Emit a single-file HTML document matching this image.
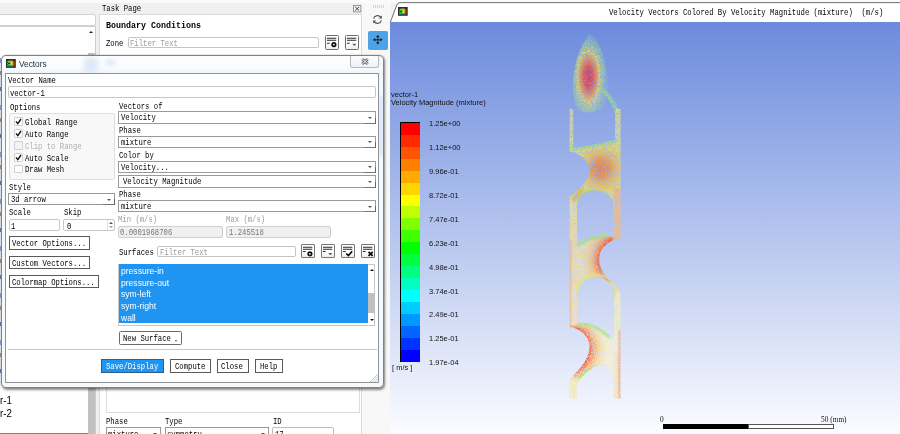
<!DOCTYPE html>
<html><head><meta charset="utf-8"><title>Vectors</title>
<style>
html,body{margin:0;padding:0}
body{width:900px;height:434px;overflow:hidden;background:#f0f0f0;position:relative;font-family:"Liberation Mono",monospace;font-size:9px;color:#000}
div,span{position:absolute;box-sizing:border-box}
.m{font:9px/9px "Liberation Mono",monospace;white-space:pre;transform:scaleX(.806);transform-origin:0 0;color:#000}
.b{font:bold 9px/9px "Liberation Mono",monospace;white-space:pre;transform:scaleX(.926);transform-origin:0 0}
.s{font:9.3px/10px "Liberation Sans",sans-serif;white-space:pre;transform:scaleX(.89);transform-origin:0 0}
.g{color:#9a9a9a}
.in{background:#fff;border:1px solid #c6c6c6;border-radius:2px}
.dd{background:#fff;border:1px solid #9a9a9a}
.dd:after{content:"";position:absolute;right:3px;top:4.5px;border:2px solid transparent;border-top:2.5px solid #555;border-bottom:0}
.dd:before{content:"";position:absolute;right:-1px;bottom:-1px;width:11px;height:5px;border-right:1.5px solid #666;border-bottom:1.5px solid #777}
.bt{background:#fff;border:1px solid #5a5a5a}
.ib{background:linear-gradient(#fff 55%,#ececec);border:1px solid #6e6e6e;border-radius:1.5px}
.cb{width:8.5px;height:8.5px;background:#fff;border:1px solid #d0d0d0;border-radius:1px}
.ro{background:#f0f0f0;border:1px solid #cfcfcf;border-radius:2px}
</style></head><body>

<div class="" style="left:0px;top:0px;width:900.0px;height:2.5px;background:#fbfbfb"></div>
<div class="in" style="left:-2px;top:14px;width:97.5px;height:11.5px;border-color:#d2d2d2"></div>
<div class="" style="left:-2px;top:26px;width:97.8px;height:414.0px;background:#fff;border:1px solid #cdcdcd"></div>
<div class="" style="left:88px;top:27px;width:7.0px;height:413.0px;background:#fdfdfd"></div>
<div style="left:89.3px;top:31px;border:2.2px solid transparent;border-bottom:2.6px solid #222;border-top:0"></div>
<div class="" style="left:88.2px;top:52.5px;width:6.6px;height:387.5px;background:#c1c1c1"></div>
<span class="s" style="left:0;top:395.6px;font-size:10px;transform:scaleX(.97)">r-1</span><span class="s" style="left:0;top:408.7px;font-size:10px;transform:scaleX(.97)">r-2</span>
<div class="" style="left:0px;top:432.7px;width:88.2px;height:1.3px;background:#2a95f0"></div>
<span class="m" style="left:102px;top:4.6px;">Task Page</span>
<div class="" style="left:99px;top:14.3px;width:262.8px;height:425.7px;background:#fff;border:1px solid #d9d9d9"></div>
<svg style="position:absolute;left:353px;top:5px" width="9" height="8" viewBox="0 0 9 8"><rect x=".5" y=".5" width="7.4" height="6.4" fill="#f4f4f4" stroke="#8a8a8a" stroke-width=".9"/><path d="M2.2 1.9L6.2 5.5M6.2 1.9L2.2 5.5" stroke="#444" stroke-width="1"/></svg>
<span class="b" style="left:105.8px;top:21.8px;">Boundary Conditions</span>
<span class="m" style="left:106.2px;top:40.1px;">Zone</span>
<div class="in" style="left:127.5px;top:37.2px;width:191.8px;height:10.4px;border-color:#c4c4c4"></div>
<span class="m g" style="left:130px;top:39.6px;">Filter Text</span>
<div class="ib" style="left:325.1px;top:35.3px;width:13.8px;height:14.3px;"><svg style="position:absolute;left:0;top:0" width="12" height="12.4" viewBox="0 0 12 12.4"><path d="M.9 2.2h9.400M.9 4.3h9.400M.9 7.2h2.800" stroke="#2a2a2a" stroke-width="1.05" fill="none"/><circle cx="7.900" cy="8.6" r="1.750" fill="none" stroke="#0a0a0a" stroke-width="1.700"/></svg></div>
<div class="ib" style="left:345.1px;top:35.3px;width:13.8px;height:14.3px;"><svg style="position:absolute;left:0;top:0" width="12" height="12.4" viewBox="0 0 12 12.4"><path d="M.9 2.2h9.400M.9 4.3h9.400M.9 7.2h2.800" stroke="#2a2a2a" stroke-width="1.05" fill="none"/><path d="M6.200 7.80h4.200l-2.100 2.100z" fill="#5a5a5a"/></svg></div>
<div class="" style="left:106px;top:380px;width:253.7px;height:32.6px;border:1px solid #dcdcdc;background:#fff"></div>
<span class="m" style="left:106px;top:417.8px;">Phase</span>
<span class="m" style="left:165px;top:417.8px;">Type</span>
<span class="m" style="left:273px;top:417.8px;">ID</span>
<div class="dd" style="left:105.5px;top:427px;width:55.5px;height:13.6px;"></div>
<span class="m" style="left:108px;top:430.8px;">mixture</span>
<div class="dd" style="left:164.7px;top:427px;width:104.3px;height:13.6px;"></div>
<span class="m" style="left:167px;top:430.8px;">symmetry</span>
<div class="in" style="left:272px;top:427px;width:61.5px;height:13.0px;border-color:#bdbdbd"></div>
<span class="m" style="left:275px;top:430.8px;">17</span>
<div class="" style="left:362.3px;top:2.5px;width:28.3px;height:437.5px;background:#f8f8f8"></div>
<svg style="position:absolute;left:372px;top:4px" width="14" height="5" viewBox="0 0 14 5"><rect x="1" y="1" width=".9" height="3" fill="#d0d0d0"/><rect x="3" y="1" width=".9" height="3" fill="#d0d0d0"/><rect x="5" y="1" width=".9" height="3" fill="#d0d0d0"/><rect x="7" y="1" width=".9" height="3" fill="#d0d0d0"/><rect x="9" y="1" width=".9" height="3" fill="#d0d0d0"/><rect x="11" y="1" width=".9" height="3" fill="#d0d0d0"/></svg>
<svg style="position:absolute;left:371px;top:12.800px" width="13" height="13" viewBox="0 0 13 13"><path d="M2.6 5.6A4 4 0 0 1 9.6 4.2M10.4 7.4A4 4 0 0 1 3.4 8.8" fill="none" stroke="#4a4a4a" stroke-width="1.1"/><path d="M10.8 2.4v3h-3z" fill="#4a4a4a"/><path d="M2.2 10.6v-3h3z" fill="#4a4a4a"/></svg>
<div class="" style="left:368px;top:30.5px;width:20.0px;height:19.2px;background:#4ca3e8;border-radius:1.8px"><svg style="position:absolute;left:5.1px;top:4.6px" width="9.6" height="9.6" viewBox="0 0 12 12"><path d="M6 2.5v7M2.5 6h7" stroke="#111" stroke-width=".9"/><circle cx="6" cy="6" r="1" fill="#111"/><path d="M6 0l2.2 2.9h-4.400zM6 12l2.2-2.9h-4.400zM0 6l2.9-2.200v4.400zM12 6l-2.900-2.200v4.400z" fill="#111"/></svg></div>
<svg style="position:absolute;left:385px;top:0" width="515" height="24" viewBox="385 0 515 24"><path d="M390.2 22.5L396.900 4.800Q397.700 2.600 400 2.600H900V22.5z" fill="#fff"/><path d="M390.2 22.5L396.900 4.800Q397.700 2.600 400 2.600H900" fill="none" stroke="#6e6e6e" stroke-width="1"/></svg>
<svg style="position:absolute;left:398.2px;top:7px" width="9.7" height="8.8" viewBox="0 0 20 18" preserveAspectRatio="none"><defs><filter id="fi398"><feGaussianBlur stdDeviation=".8"/></filter></defs><rect width="20" height="18" fill="#2c2c2c"/><g filter="url(#fi398)"><path d="M2 6C4 3 10 2.500 14 3.500L16 6H2z" fill="#f0a020"/><path d="M2 9C2 6 7 5 12 5.500L15 9L12 12.500C7 13 2 12 2 9z" fill="#20d828"/><path d="M9 6h5v6h-5z" fill="#e8e020"/><path d="M14 5.500h3.500v7H14z" fill="#e83018"/><path d="M2 12.500h14v2.500H2z" fill="#18b0c8"/><path d="M4.500 8h4v2h-4z" fill="#102010"/></g></svg>
<span class="m" style="right:16.5px;top:9.3px;transform-origin:100% 0">Velocity Vectors Colored By Velocity Magnitude (mixture)  (m/s)</span>
<div class="" style="left:390.3px;top:22.3px;width:509.7px;height:411.7px;background:linear-gradient(#6c8bdd 0%,#fbfcff 100%)"></div>
<span style="left:391.4px;top:90.1px;font:8px/9px 'Liberation Sans',sans-serif;white-space:pre;color:#111;transform:scaleX(.938);transform-origin:0 0" id="lg1">vector-1</span>
<span style="left:391.4px;top:98.3px;font:8px/9px 'Liberation Sans',sans-serif;white-space:pre;color:#111;transform:scaleX(.938);transform-origin:0 0" id="lg2">Velocity Magnitude (mixture)</span>
<div style="left:399.8px;top:122.4px;width:20.6px;height:239.8px;background:#000"></div>
<div style="left:400.5px;top:122.90px;width:19.2px;height:11.99px;background:#ff0000"></div>
<div style="left:400.5px;top:134.84px;width:19.2px;height:11.99px;background:#ff2a00"></div>
<div style="left:400.5px;top:146.78px;width:19.2px;height:11.99px;background:#ff5500"></div>
<div style="left:400.5px;top:158.72px;width:19.2px;height:11.99px;background:#ff8000"></div>
<div style="left:400.5px;top:170.66px;width:19.2px;height:11.99px;background:#ffaa00"></div>
<div style="left:400.5px;top:182.60px;width:19.2px;height:11.99px;background:#ffd500"></div>
<div style="left:400.5px;top:194.54px;width:19.2px;height:11.99px;background:#ffff00"></div>
<div style="left:400.5px;top:206.48px;width:19.2px;height:11.99px;background:#bfff00"></div>
<div style="left:400.5px;top:218.42px;width:19.2px;height:11.99px;background:#80ff00"></div>
<div style="left:400.5px;top:230.36px;width:19.2px;height:11.99px;background:#40ff00"></div>
<div style="left:400.5px;top:242.30px;width:19.2px;height:11.99px;background:#00ff00"></div>
<div style="left:400.5px;top:254.24px;width:19.2px;height:11.99px;background:#00ff40"></div>
<div style="left:400.5px;top:266.18px;width:19.2px;height:11.99px;background:#00ff80"></div>
<div style="left:400.5px;top:278.12px;width:19.2px;height:11.99px;background:#00ffbf"></div>
<div style="left:400.5px;top:290.06px;width:19.2px;height:11.99px;background:#00ffff"></div>
<div style="left:400.5px;top:302.00px;width:19.2px;height:11.99px;background:#00ccff"></div>
<div style="left:400.5px;top:313.94px;width:19.2px;height:11.99px;background:#0099ff"></div>
<div style="left:400.5px;top:325.88px;width:19.2px;height:11.99px;background:#0066ff"></div>
<div style="left:400.5px;top:337.82px;width:19.2px;height:11.99px;background:#0033ff"></div>
<div style="left:400.5px;top:349.76px;width:19.2px;height:11.99px;background:#0000ff"></div>
<span class="lb" style="left:429.4px;top:119.3px;font:8px/9px 'Liberation Sans',sans-serif;white-space:pre;color:#111;transform:scaleX(.938);transform-origin:0 0">1.25e+00</span>
<span class="lb" style="left:429.4px;top:143.2px;font:8px/9px 'Liberation Sans',sans-serif;white-space:pre;color:#111;transform:scaleX(.938);transform-origin:0 0">1.12e+00</span>
<span class="lb" style="left:429.4px;top:167.1px;font:8px/9px 'Liberation Sans',sans-serif;white-space:pre;color:#111;transform:scaleX(.938);transform-origin:0 0">9.96e-01</span>
<span class="lb" style="left:429.4px;top:190.9px;font:8px/9px 'Liberation Sans',sans-serif;white-space:pre;color:#111;transform:scaleX(.938);transform-origin:0 0">8.72e-01</span>
<span class="lb" style="left:429.4px;top:214.8px;font:8px/9px 'Liberation Sans',sans-serif;white-space:pre;color:#111;transform:scaleX(.938);transform-origin:0 0">7.47e-01</span>
<span class="lb" style="left:429.4px;top:238.7px;font:8px/9px 'Liberation Sans',sans-serif;white-space:pre;color:#111;transform:scaleX(.938);transform-origin:0 0">6.23e-01</span>
<span class="lb" style="left:429.4px;top:262.6px;font:8px/9px 'Liberation Sans',sans-serif;white-space:pre;color:#111;transform:scaleX(.938);transform-origin:0 0">4.98e-01</span>
<span class="lb" style="left:429.4px;top:286.5px;font:8px/9px 'Liberation Sans',sans-serif;white-space:pre;color:#111;transform:scaleX(.938);transform-origin:0 0">3.74e-01</span>
<span class="lb" style="left:429.4px;top:310.3px;font:8px/9px 'Liberation Sans',sans-serif;white-space:pre;color:#111;transform:scaleX(.938);transform-origin:0 0">2.49e-01</span>
<span class="lb" style="left:429.4px;top:334.2px;font:8px/9px 'Liberation Sans',sans-serif;white-space:pre;color:#111;transform:scaleX(.938);transform-origin:0 0">1.25e-01</span>
<span class="lb" style="left:429.4px;top:358.1px;font:8px/9px 'Liberation Sans',sans-serif;white-space:pre;color:#111;transform:scaleX(.938);transform-origin:0 0">1.97e-04</span>
<span style="left:391.6px;top:363.2px;font:8px/9px 'Liberation Sans',sans-serif;white-space:pre;color:#111;transform:scaleX(.938);transform-origin:0 0">[ m/s ]</span>
<div class="" style="left:662.5px;top:424.2px;width:86.1px;height:4.5px;background:#000"></div>
<div class="" style="left:748.4px;top:424.2px;width:85.3px;height:4.5px;background:#fff;border:1px solid #555"></div>
<span style="left:660px;top:414.6px;font:8px/9px 'Liberation Serif',serif;white-space:pre;color:#111;transform:scaleX(.92);transform-origin:0 0">0</span>
<span style="left:820.6px;top:414.6px;font:8px/9px 'Liberation Serif',serif;white-space:pre;color:#111;transform:scaleX(.92);transform-origin:0 0">50 (mm)</span>
<svg style="position:absolute;left:540px;top:25px" width="120" height="385" viewBox="540 25 120 385"><defs><filter id="sp" x="-10%" y="-5%" width="120%" height="110%"><feTurbulence type="fractalNoise" baseFrequency="1.1" numOctaves="2" seed="7" result="n"/><feColorMatrix in="n" type="matrix" values="0 0 0 0 0 0 0 0 0 0 0 0 0 0 0 0 0 0 3 -0.6" result="a"/><feComposite in="SourceGraphic" in2="a" operator="in" result="c"/><feGaussianBlur in="c" stdDeviation=".3"/></filter><filter id="b1" x="-30%" y="-30%" width="160%" height="160%"><feGaussianBlur stdDeviation="1.1"/></filter><filter id="b0" x="-30%" y="-30%" width="160%" height="160%"><feGaussianBlur stdDeviation=".6"/></filter><radialGradient id="rg1" gradientUnits="userSpaceOnUse" cx="0" cy="0" r="1" gradientTransform="translate(588.500 77) scale(18.500 42)"><stop offset="0" stop-color="#d8365a"/><stop offset=".25" stop-color="#e05050"/><stop offset=".45" stop-color="#e89a58"/><stop offset=".6" stop-color="#e4d670" stop-opacity=".95"/><stop offset=".78" stop-color="#b0dc8c" stop-opacity=".7"/><stop offset="1" stop-color="#98d8a0" stop-opacity=".3"/></radialGradient><radialGradient id="rg2" gradientUnits="userSpaceOnUse" cx="601" cy="169" r="34"><stop offset="0" stop-color="#e87c44"/><stop offset=".25" stop-color="#e8904c"/><stop offset=".45" stop-color="#e8bc60"/><stop offset=".7" stop-color="#e6d874"/><stop offset="1" stop-color="#d8e088"/></radialGradient><radialGradient id="rg3" gradientUnits="userSpaceOnUse" cx="622" cy="260" r="56"><stop offset=".37" stop-color="#f0442a"/><stop offset=".42" stop-color="#f06238"/><stop offset=".48" stop-color="#f29a5c"/><stop offset=".58" stop-color="#f2cc8c"/><stop offset=".72" stop-color="#f0e0ac"/><stop offset="1" stop-color="#f0dca4"/></radialGradient><radialGradient id="rg4" gradientUnits="userSpaceOnUse" cx="566" cy="349" r="58"><stop offset=".37" stop-color="#f03c28"/><stop offset=".42" stop-color="#f46238"/><stop offset=".48" stop-color="#f8a464"/><stop offset=".57" stop-color="#f8d898"/><stop offset=".7" stop-color="#f8f0cc"/><stop offset="1" stop-color="#f8f0d4"/></radialGradient><mask id="ch" maskUnits="userSpaceOnUse" x="540" y="25" width="120" height="385"><rect x="569.6" y="109" width="51" height="289.5" fill="#fff"/><path fill="#000" d="M573.3,100V147.6L586,146L603,142.5L615.2,139.5V100ZM560,149.5C576,151 589.5,158 589.5,170C589.5,181 580,189 569,197.5L560,200ZM577,243V206C577,196.5 586,190.5 596,190.5C606,190.5 613.6,196.5 613.6,206V236L604,233.2L590,237ZM630,239.5L616.5,238.6C606,243 599.2,250 599.2,259C599.2,268 604,276 611,281C615,284 618,288 621.5,293L630,293ZM577.6,322V296C577.6,285 586,277.3 596,277.3C606,277.3 614,285 614,296V341C612,337 606,331 599,327.5C594,324 588,322 577.6,323ZM560,326L573.5,327.5C582,331 589.5,337 589.5,346C589.5,356 584,364 578,370.5C574,375 571,378 569,381L560,381ZM576.6,399V386C580,377 590,368 600,365.5C608,364.5 613.6,372 613.6,381V399Z"/></mask></defs><g filter="url(#sp)" opacity=".9"><g filter="url(#b0)"><path d="M590,33.5C597,38 603,50 606,66C608.500,82 608.500,97 604,105.500C599,112 588,114 581,111.500C575,108.500 573,98 573,84C573,66 580,44 590,33.500Z" fill="url(#rg1)"/><path d="M602,90Q612,97 617.5,113" fill="none" stroke="#98dc8c" stroke-width="4.500" stroke-linecap="round" opacity=".85"/></g><g mask="url(#ch)"><g filter="url(#b1)"><rect x="560" y="100" width="70" height="305" fill="#ece088" opacity=".85"/><rect x="566" y="105" width="9" height="46" fill="#d0dc9c" opacity=".5"/><rect x="613" y="105" width="10" height="36" fill="#d4e098" opacity=".7"/><rect x="566" y="138" width="58" height="56" fill="url(#rg2)"/><rect x="566" y="236" width="58" height="46" fill="url(#rg3)"/><rect x="566" y="322" width="58" height="56" fill="url(#rg4)"/><rect x="613" y="188" width="10" height="52" fill="#eebc84"/><rect x="566" y="200" width="11.5" height="38" fill="#eee09c"/><rect x="566" y="284" width="11.5" height="42" fill="#f4e0b0"/><rect x="568.6" y="240" width="2.4" height="88" fill="#f0a468"/><rect x="613.5" y="292" width="10" height="40" fill="#f2ecc0"/><rect x="613.5" y="352" width="10" height="50" fill="#f6e4c0"/><rect x="618.6" y="330" width="2.6" height="70" fill="#f09468"/><rect x="566" y="380" width="11" height="22" fill="#f6e8b0"/></g><g filter="url(#b1)" fill="none" stroke-linecap="round"><path d="M573,148.5L586,146.5L603,143L616,140" stroke="#9cdc88" stroke-width="4"/><path d="M574,199L581,190.500" stroke="#f0b838" stroke-width="5"/><path d="M579,202C581,195 588,191.5 597,191.5" stroke="#7ee45c" stroke-width="3.4"/><path d="M597,191.500C604,191.5 611,195 613,203" stroke="#e0dc68" stroke-width="3"/><path d="M578,244.500L590,238.500L606,234.500" stroke="#96e474" stroke-width="3.6"/><path d="M579,296C580,285 588,279 596,279C604,279 612,285 613,297" stroke="#b0e468" stroke-width="3.2"/><path d="M576,290C578,280 586,275 596,275C606,275 613,280 616,289" stroke="#f0e470" stroke-width="2.5"/><path d="M579,325.500L588,323.500L599,329L610,337" stroke="#a0e47c" stroke-width="3.4"/><path d="M580,377C585,371.500 593,368.500 603,367" stroke="#a8e468" stroke-width="2.8"/></g></g></g></svg>
<div style="left:0;top:58px;width:1.1px;height:327px;opacity:.75;background:repeating-linear-gradient(#6f86c8 0,#6f86c8 5px,#e8ecf4 5px,#e8ecf4 13px,#8a6a50 13px,#8a6a50 17px,#dfe6f2 17px,#dfe6f2 29px,#39508c 29px,#39508c 33px,#eef2f8 33px,#eef2f8 47px)"></div>
<div style="left:1.2px;top:55.4px;width:382.5px;height:332.4px;border:1px solid #7e8288;border-radius:5px;background:linear-gradient(#fcfdfe 0,#fafcfe 12px,#eef4fa 17px,#f4f8fc 22px,#f6f9fc 100%);box-shadow:1px 1.5px 2.5px rgba(0,0,0,.45),0 0 1px rgba(0,0,0,.4);overflow:hidden"><div style="left:82px;top:2px;width:14px;height:16px;background:#dce9f7;filter:blur(2.5px)"></div><div style="left:104px;top:4px;width:9px;height:5px;background:#d8e6f6;filter:blur(2px)"></div><div style="left:376.5px;top:40px;width:5px;height:60px;background:#dce8f6;filter:blur(1.5px)"></div><div style="left:368px;top:2px;width:9px;height:9px;background:#d6e4f4;filter:blur(2px)"></div></div>
<svg style="position:absolute;left:5.8px;top:59.3px" width="9.8" height="8.9" viewBox="0 0 20 18" preserveAspectRatio="none"><defs><filter id="fi5"><feGaussianBlur stdDeviation=".8"/></filter></defs><rect width="20" height="18" fill="#2c2c2c"/><g filter="url(#fi5)"><path d="M2 6C4 3 10 2.500 14 3.500L16 6H2z" fill="#f0a020"/><path d="M2 9C2 6 7 5 12 5.500L15 9L12 12.500C7 13 2 12 2 9z" fill="#20d828"/><path d="M9 6h5v6h-5z" fill="#e8e020"/><path d="M14 5.500h3.500v7H14z" fill="#e83018"/><path d="M2 12.500h14v2.500H2z" fill="#18b0c8"/><path d="M4.500 8h4v2h-4z" fill="#102010"/></g></svg>
<span class="s" style="left:19px;top:58.6px;color:#1c2a3a" id="ttl">Vectors</span>
<div style="left:349.9px;top:56px;width:29.1px;height:11.6px;border:1px solid #b4bac2;border-top:0;border-radius:0 0 3px 3px;background:linear-gradient(#fdfdfe,#eef1f5)"><svg style="position:absolute;left:10px;top:1.6px" width="8" height="7" viewBox="0 0 8 7"><path d="M1.2 1L6.8 6M6.8 1L1.2 6" stroke="#5c626a" stroke-width="2.7"/><path d="M1.2 1L6.8 6M6.8 1L1.2 6" stroke="#fff" stroke-width="1"/></svg></div>
<div class="" style="left:5.2px;top:72.8px;width:373.8px;height:310.4px;background:#fff;border:1px solid #8e9399"></div>
<span class="m" style="left:8.2px;top:77.3px;">Vector Name</span>
<div class="in" style="left:8.3px;top:86px;width:367.7px;height:11.6px;"></div>
<span class="m" style="left:10px;top:89.9px;">vector-1</span>
<span class="m" style="left:10px;top:104.3px;">Options</span>
<div class="" style="left:8.7px;top:113.3px;width:106.7px;height:66.9px;background:#f8f8f8;border:1px solid #dedede;border-radius:1.5px"></div>
<div class="cb" style="left:14.2px;top:117.4px;width:8.5px;height:8.5px;"><svg style="position:absolute;left:0px;top:-.3px" width="7" height="7" viewBox="0 0 7 7"><path d="M1 3.4l1.8 2.2l3.2-4.6" stroke="#111" stroke-width="1.4" fill="none"/></svg></div>
<span class="m" style="left:25.3px;top:118.8px;">Global Range</span>
<div class="cb" style="left:14.2px;top:129.39999999999998px;width:8.5px;height:8.5px;"><svg style="position:absolute;left:0px;top:-.3px" width="7" height="7" viewBox="0 0 7 7"><path d="M1 3.4l1.8 2.2l3.2-4.6" stroke="#111" stroke-width="1.4" fill="none"/></svg></div>
<span class="m" style="left:25.3px;top:130.8px;">Auto Range</span>
<div class="cb" style="left:14.2px;top:141.2px;width:8.5px;height:8.5px;background:#f3f3f3;border-color:#d2d2d2"></div>
<span class="m g" style="left:25.3px;top:142.6px;color:#b0b0b0">Clip to Range</span>
<div class="cb" style="left:14.2px;top:153.2px;width:8.5px;height:8.5px;"><svg style="position:absolute;left:0px;top:-.3px" width="7" height="7" viewBox="0 0 7 7"><path d="M1 3.4l1.8 2.2l3.2-4.6" stroke="#111" stroke-width="1.4" fill="none"/></svg></div>
<span class="m" style="left:25.3px;top:154.6px;">Auto Scale</span>
<div class="cb" style="left:14.2px;top:164.89999999999998px;width:8.5px;height:8.5px;"></div>
<span class="m" style="left:25.3px;top:166.3px;">Draw Mesh</span>
<span class="m" style="left:8.7px;top:184.0px;">Style</span>
<div class="dd" style="left:8.3px;top:193px;width:106.9px;height:12.4px;"></div>
<span class="m" style="left:11px;top:196.1px;">3d arrow</span>
<span class="m" style="left:8.7px;top:209.0px;">Scale</span>
<span class="m" style="left:63.8px;top:209.0px;">Skip</span>
<div class="in" style="left:8.7px;top:218.7px;width:51.7px;height:12.7px;"></div>
<span class="m" style="left:11px;top:222.9px;">1</span>
<div class="in" style="left:63.3px;top:218.7px;width:51.9px;height:12.7px;"></div>
<span class="m" style="left:67px;top:222.9px;">0</span>
<div style="left:106.5px;top:219.7px;width:1px;height:10.7px;background:#ddd"></div>
<div style="left:108.8px;top:222px;border:2px solid transparent;border-bottom:2.4px solid #555;border-top:0"></div>
<div style="left:108.8px;top:226.2px;border:2px solid transparent;border-top:2.4px solid #999;border-bottom:0"></div>
<div class="bt" style="left:9.2px;top:235.8px;width:81.0px;height:13.8px;"></div>
<span class="m" style="left:11.9px;top:240.1px;">Vector Options...</span>
<div class="bt" style="left:9.2px;top:255.5px;width:81.0px;height:13.8px;"></div>
<span class="m" style="left:11.9px;top:259.8px;">Custom Vectors...</span>
<div class="bt" style="left:9.2px;top:274.6px;width:89.6px;height:13.8px;"></div>
<span class="m" style="left:11.9px;top:278.9px;">Colormap Options...</span>
<span class="m" style="left:118.5px;top:103.0px;">Vectors of</span>
<div class="dd" style="left:118px;top:111.3px;width:258.0px;height:12.7px;"></div>
<span class="m" style="left:120.8px;top:114.3px;">Velocity</span>
<span class="m" style="left:118.5px;top:127.3px;">Phase</span>
<div class="dd" style="left:118px;top:135.8px;width:258.0px;height:12.4px;"></div>
<span class="m" style="left:120.8px;top:138.8px;">mixture</span>
<span class="m" style="left:118.5px;top:151.8px;">Color by</span>
<div class="dd" style="left:118px;top:160.8px;width:258.0px;height:12.2px;"></div>
<span class="m" style="left:120.8px;top:163.6px;">Velocity...</span>
<div class="dd" style="left:118px;top:175.3px;width:258.0px;height:12.8px;"></div>
<span class="m" style="left:122.6px;top:178.3px;">Velocity Magnitude</span>
<span class="m" style="left:118.5px;top:191.0px;">Phase</span>
<div class="dd" style="left:118px;top:200px;width:258.0px;height:12.2px;"></div>
<span class="m" style="left:120.8px;top:202.9px;">mixture</span>
<span class="m g" style="left:118.3px;top:215.6px;">Min (m/s)</span>
<span class="m g" style="left:226.2px;top:215.6px;">Max (m/s)</span>
<div class="ro" style="left:118px;top:225.5px;width:105.4px;height:12.9px;"></div>
<span class="m" style="left:120.4px;top:229.4px;color:#777">0.0001968706</span>
<div class="ro" style="left:226.3px;top:225.5px;width:104.3px;height:12.9px;"></div>
<span class="m" style="left:228.8px;top:229.4px;color:#777">1.245518</span>
<span class="m" style="left:118.7px;top:248.8px;">Surfaces</span>
<div class="in" style="left:157.2px;top:246px;width:138.4px;height:10.6px;border-color:#c4c4c4"></div>
<span class="m g" style="left:159.5px;top:248.5px;">Filter Text</span>
<div class="ib" style="left:301.1px;top:244.2px;width:13.7px;height:13.8px;border-radius:1px;border-color:#787878"><svg style="position:absolute;left:0;top:0" width="12" height="12.4" viewBox="0 0 12 12.4"><path d="M.9 2.3h9.400M.9 4.3h9.400M.9 6.6h2.800" stroke="#2a2a2a" stroke-width="1.05" fill="none"/><circle cx="7.900" cy="8.9" r="1.750" fill="none" stroke="#0a0a0a" stroke-width="1.700"/></svg></div>
<div class="ib" style="left:321.1px;top:244.2px;width:13.7px;height:13.8px;border-radius:1px;border-color:#787878"><svg style="position:absolute;left:0;top:0" width="12" height="12.4" viewBox="0 0 12 12.4"><path d="M.9 2.3h9.400M.9 4.3h9.400M.9 6.6h2.800" stroke="#2a2a2a" stroke-width="1.05" fill="none"/><path d="M6.200 8.10h4.200l-2.100 2.100z" fill="#5a5a5a"/></svg></div>
<div class="ib" style="left:341.1px;top:244.2px;width:13.7px;height:13.8px;border-radius:1px;border-color:#787878"><svg style="position:absolute;left:0;top:0" width="12" height="12.4" viewBox="0 0 12 12.4"><path d="M.9 2.3h9.400M.9 4.3h9.400M.9 6.6h2.800" stroke="#2a2a2a" stroke-width="1.05" fill="none"/><path d="M4.300 8.50l2.100 2l3.800-4.300" stroke="#0a0a0a" stroke-width="1.700" fill="none"/></svg></div>
<div class="ib" style="left:361.1px;top:244.2px;width:13.7px;height:13.8px;border-radius:1px;border-color:#787878"><svg style="position:absolute;left:0;top:0" width="12" height="12.4" viewBox="0 0 12 12.4"><path d="M.9 2.3h9.400M.9 4.3h9.400M.9 6.6h2.800" stroke="#2a2a2a" stroke-width="1.05" fill="none"/><path d="M6.500 6.80l4.200 4M10.700 6.80l-4.200 4" stroke="#0a0a0a" stroke-width="1.800" fill="none"/></svg></div>
<div class="" style="left:118.3px;top:263.6px;width:257.2px;height:62.3px;background:#fff;border:1px solid #c9c9c9"></div>
<div class="" style="left:119.2px;top:264.4px;width:248.9px;height:58.7px;background:#2094f1"></div>
<span class="s li" style="transform:scaleX(.92);left:120.8px;top:265.6px;color:#fff">pressure-in</span>
<span class="s li" style="transform:scaleX(.92);left:120.8px;top:277.5px;color:#fff">pressure-out</span>
<span class="s li" style="transform:scaleX(.92);left:120.8px;top:289.3px;color:#fff">sym-left</span>
<span class="s li" style="transform:scaleX(.92);left:120.8px;top:301.2px;color:#fff">sym-right</span>
<span class="s li" style="transform:scaleX(.92);left:120.8px;top:313.0px;color:#fff">wall</span>
<div style="left:369.6px;top:269px;border:2.2px solid transparent;border-bottom:2.6px solid #111;border-top:0"></div>
<div style="left:369.6px;top:319px;border:2.2px solid transparent;border-top:2.6px solid #111;border-bottom:0"></div>
<div class="" style="left:368.2px;top:293.3px;width:6.8px;height:19.3px;background:#c1c1c1"></div>
<div class="bt" style="left:119.2px;top:331.2px;width:62.6px;height:13.6px;border-color:#6a6a6a;border-radius:1.5px"></div>
<span class="m" style="left:122.5px;top:335.1px;">New Surface</span>
<div style="left:175.3px;top:339.6px;border:1.8px solid transparent;border-top:2px solid #555;border-bottom:0"></div>
<div class="" style="left:7.7px;top:348.8px;width:368.9px;height:1.0px;background:#c9c9c9"></div>
<div class="bt" style="left:100.8px;top:358.6px;width:63.1px;height:14.0px;background:#2094f1;border-color:#2c5e8c"></div>
<span class="m" style="left:105.6px;top:362.8px;color:#fff">Save/Display</span>
<div class="bt" style="left:170.4px;top:358.6px;width:40.3px;height:14.0px;"></div>
<span class="m" style="left:174.5px;top:362.8px;">Compute</span>
<div class="bt" style="left:217.1px;top:358.6px;width:31.7px;height:14.0px;"></div>
<span class="m" style="left:221.3px;top:362.8px;">Close</span>
<div class="bt" style="left:255.2px;top:358.6px;width:27.7px;height:14.0px;"></div>
<span class="m" style="left:259.8px;top:362.8px;">Help</span>
<svg style="position:absolute;left:370px;top:374px" width="8" height="8" viewBox="0 0 8 8"><path d="M0 8L8 0M2.5 8L8 2.5M5 8L8 5" stroke="#b8b8b8" stroke-width=".8"/></svg>
</body></html>
